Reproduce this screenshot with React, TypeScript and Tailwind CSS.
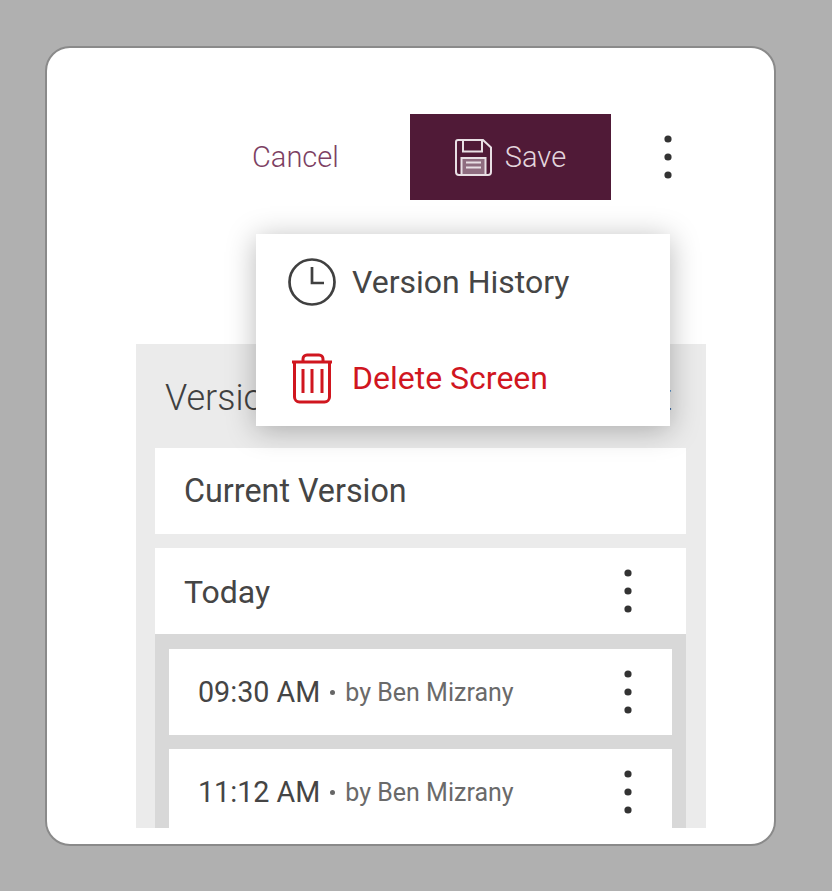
import React from "react";

const Kebab = ({ className = "" }: { className?: string }) => (
  <svg width="10" height="46" viewBox="0 0 10 46" className={className}>
    <circle cx="5" cy="5" r="3.6" fill="#333" />
    <circle cx="5" cy="23" r="3.6" fill="#333" />
    <circle cx="5" cy="41" r="3.6" fill="#333" />
  </svg>
);

const Row = ({ time }: { time: string }) => (
  <div className="flex h-[86px] items-center justify-between bg-white pl-[29px] pr-[39px]">
    <div className="flex items-center pt-[1px]">
      <span className="text-[28.7px] text-[#454545]">{time}</span>
      <span className="ml-[10px] mr-[10px] h-[5px] w-[5px] rounded-full bg-[#666]" />
      <span className="text-[25px] text-[#6a6a6a]">by Ben Mizrany</span>
    </div>
    <Kebab />
  </div>
);

export default function App() {
  return (
    <div
      className="h-[891px] w-[832px] overflow-hidden bg-[#b0b0b0] pl-[45px] pt-[46px]"
      style={{ fontFamily: "Roboto, sans-serif" }}
    >
      <div className="relative h-[800px] w-[731px] overflow-hidden rounded-[25px] border-2 border-[#8a8a8a] bg-white">
        <div className="flex items-center pl-[205px] pt-[66px]">
          <span className="w-[158px] pt-[1px] text-[29px] font-light text-[#7d3f63]">Cancel</span>
          <div className="flex h-[86px] w-[201px] items-center justify-center gap-[13px] bg-[#501a37]">
            <svg width="37" height="37" viewBox="0 0 37 37" fill="none" stroke="#e8dfe4" strokeWidth="2">
              <path d="M3 1H28L36 8.500V33a3 3 0 0 1-3 3H4a3 3 0 0 1-3-3V3a2 2 0 0 1 2-2Z" />
              <path d="M8 1V12.500H27V1" />
              <rect x="6.500" y="19" width="24" height="17" fill="#8f6d80" stroke="#e8dfe4" />
              <path d="M11 23.500H26M11 28.500H26" />
            </svg>
            <span className="pt-[1px] text-[29px] font-light text-[#e3d5dd]">Save</span>
          </div>
          <Kebab className="ml-[52px]" />
        </div>

        <div className="ml-[89px] mt-[144px] h-[484px] w-[570px] overflow-hidden bg-[#ebebeb] pl-[19px] pr-[20px]">
          <div className="flex h-[104px] items-center justify-between pl-[10px] pr-[14px] pt-[4px] text-[36px] font-light text-[#404040]">
            <span>Version History</span>
            <span>t</span>
          </div>
          <div className="flex h-[86px] items-center bg-white pl-[29px] text-[32.3px] text-[#454545]">
            Current Version
          </div>
          <div className="mt-[14px] flex h-[86px] items-center justify-between bg-white pl-[29px] pr-[53px] text-[32px] text-[#454545]">
            <span className="pt-[1px]">Today</span>
            <Kebab />
          </div>
          <div className="flex flex-col gap-[14px] bg-[#d8d8d8] px-[14px] pb-[14px] pt-[15px]">
            <Row time="09:30 AM" />
            <Row time="11:12 AM" />
          </div>
        </div>

        <div className="absolute left-[209px] top-[186px] h-[192px] w-[414px] bg-white shadow-[0_4px_28px_rgba(0,0,0,0.28)]">
          <div className="flex h-[96px] items-center pl-[31px]">
            <svg width="50" height="50" viewBox="0 0 50 50" fill="none" stroke="#404040" strokeWidth="2.700" className="mr-[15px] shrink-0">
              <circle cx="25" cy="25" r="22.500" />
              <path d="M25 10V26H37" />
            </svg>
            <span className="text-[32px] text-[#454545]">Version History</span>
          </div>
          <div className="flex h-[96px] items-center pl-[35px]">
            <svg width="42" height="51" viewBox="0 0 42 51" fill="none" stroke="#d0161f" strokeWidth="3" className="mr-[19px] shrink-0">
              <path d="M1 9H41M12 9V6a4 4 0 0 1 4-4H28a4 4 0 0 1 4 4V9" />
              <path d="M3.500 9V44a5 5 0 0 0 5 5H33.500a5 5 0 0 0 5-5V9" />
              <path d="M12 16V40M21 16V40M31 16V40" />
            </svg>
            <span className="text-[32px] text-[#d0161f]">Delete Screen</span>
          </div>
        </div>
      </div>
    </div>
  );
}
